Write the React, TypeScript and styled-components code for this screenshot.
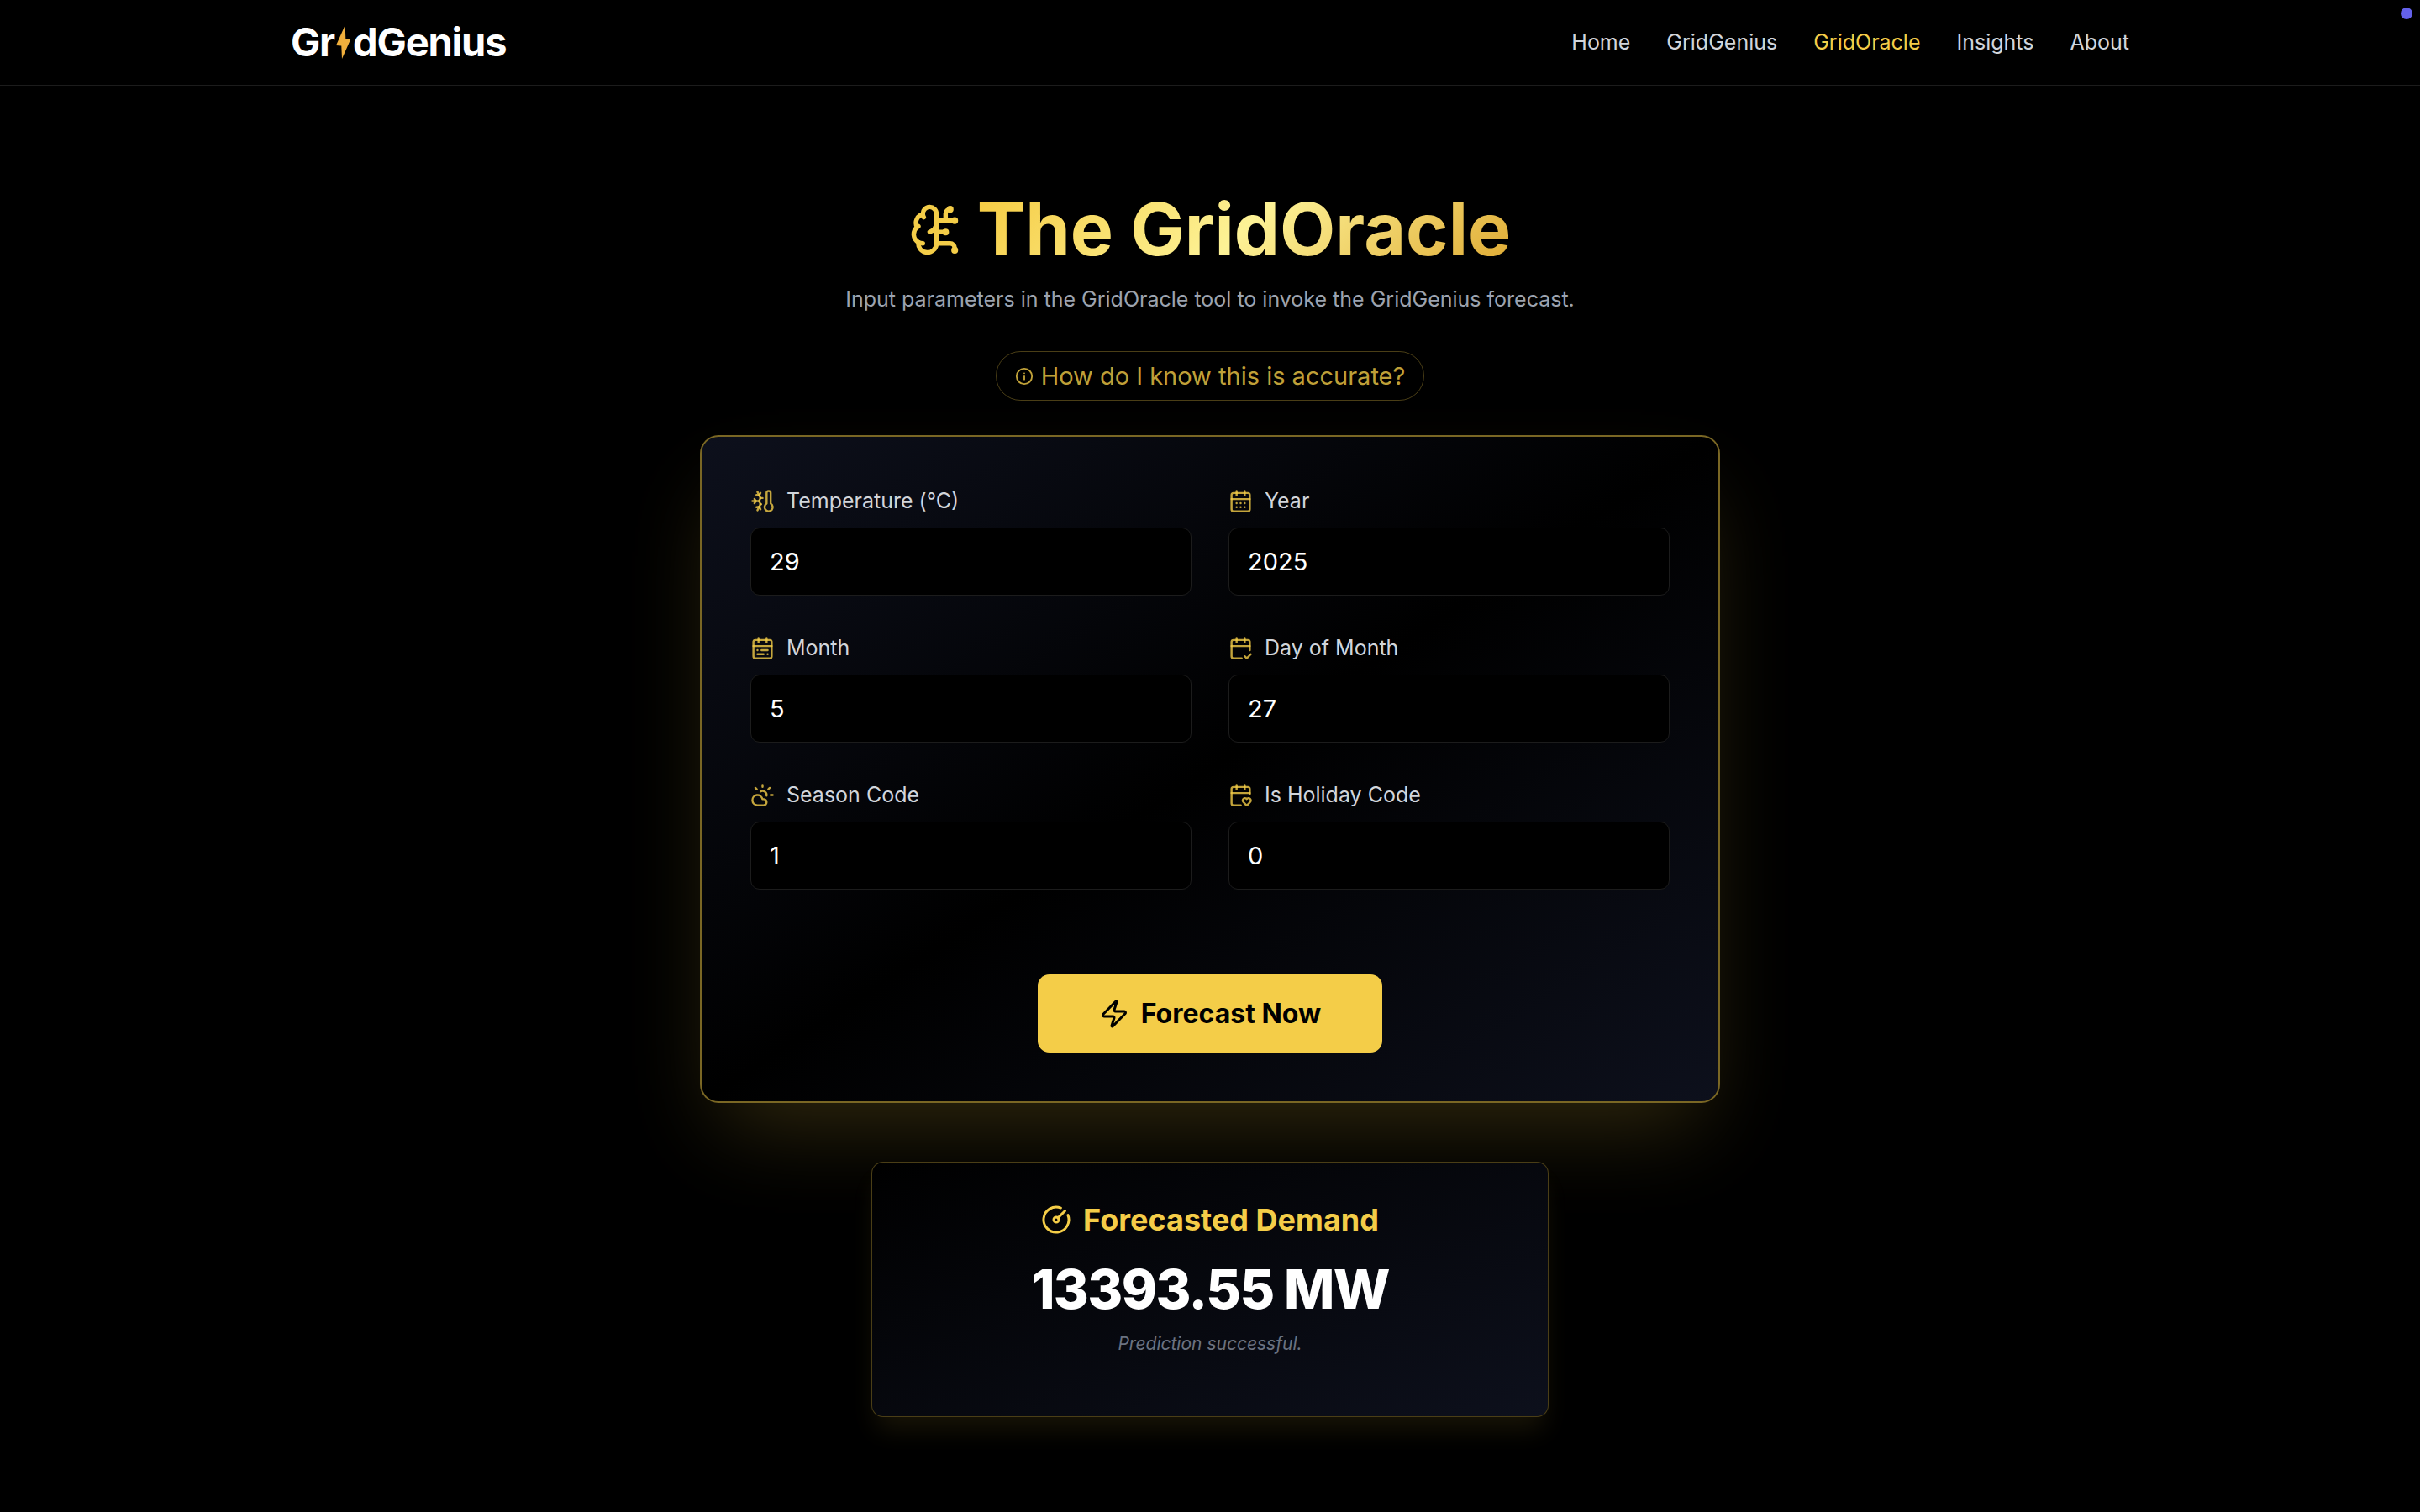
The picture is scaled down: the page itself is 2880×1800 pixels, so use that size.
import React from "react";
import styled, { createGlobalStyle } from "styled-components";
import {
  BrainCircuit,
  CalendarCheck2,
  CalendarDays,
  CalendarHeart,
  CalendarRange,
  CircleGauge,
  CloudSun,
  Info,
  ThermometerSnowflake,
  Zap,
  type LucideIcon,
} from "lucide-react";

const gold = "#f4cd48";
const goldSoft = "rgba(244, 205, 72, 0.8)";

const GlobalStyle = createGlobalStyle`
  *, *::before, *::after { box-sizing: border-box; }
  body {
    margin: 0;
    background: #000;
    color: #fff;
    font-family: Inter, "Liberation Sans", sans-serif;
    font-size: 29px;
    -webkit-font-smoothing: antialiased;
  }
  h1, h2, p { margin: 0; }
`;

const Header = styled.header`
  border-bottom: 1px solid #1c1c1c;
`;

const HeaderInner = styled.div`
  max-width: 2304px;
  margin: 0 auto;
  padding: 21px 58px 23px;
  display: flex;
  align-items: center;
  justify-content: space-between;
`;

const Logo = styled.a`
  display: inline-flex;
  align-items: center;
  color: #fff;
  font-size: 47px;
  line-height: 57px;
  font-weight: 700;
  letter-spacing: -0.025em;
  text-decoration: none;
`;

const LogoBolt = styled.svg`
  width: 22px;
  height: 44px;
`;

const Nav = styled.nav`
  display: flex;
  gap: 43px;
`;

const NavLink = styled.a<{ $active?: boolean }>`
  color: ${(p) => (p.$active ? gold : "#d1d5db")};
  font-size: 25px;
  line-height: 36px;
  text-decoration: none;
`;

const StatusDot = styled.span`
  position: fixed;
  top: 9px;
  right: 9px;
  width: 14px;
  height: 14px;
  border-radius: 50%;
  background: #6461ea;
`;

const Main = styled.main`
  display: flex;
  flex-direction: column;
  align-items: center;
  padding: 128px 58px;
`;

const Title = styled.h1`
  display: flex;
  align-items: center;
  gap: 16px;
  color: ${gold};
  font-size: 86px;
  line-height: 86px;
  font-weight: 700;
`;

const TitleText = styled.span`
  background: linear-gradient(135deg, #f5cb42, #fdf296, #dfab34);
  background-clip: text;
  -webkit-background-clip: text;
  color: transparent;
`;

const Subtitle = styled.p`
  margin-top: 22px;
  color: #9ca3af;
  font-size: 25px;
  line-height: 36px;
`;

const InfoButton = styled.button`
  margin-top: 44px;
  display: inline-flex;
  align-items: center;
  gap: 9px;
  padding: 7px 22px;
  border: 1px solid rgba(244, 205, 72, 0.3);
  border-radius: 30px;
  background: transparent;
  color: ${goldSoft};
  font: inherit;
  line-height: 43px;
`;

const FormCard = styled.form`
  width: 100%;
  max-width: 1214px;
  margin-top: 41px;
  padding: 58px;
  display: flex;
  flex-direction: column;
  align-items: center;
  gap: 101px;
  border: 2px solid rgba(244, 205, 72, 0.5);
  border-radius: 22px;
  background: linear-gradient(to bottom right, #0d101c, #000 50%, #0d101c) padding-box, #000;
  box-shadow: 0 50px 100px -24px rgba(244, 205, 72, 0.2);
`;

const Fields = styled.div`
  width: 100%;
  display: grid;
  grid-template-columns: 1fr 1fr;
  gap: 44px;
`;

const Field = styled.div`
  display: flex;
  flex-direction: column;
  gap: 14px;
`;

const FieldLabel = styled.label`
  display: flex;
  align-items: center;
  gap: 14px;
  color: #d1d5db;
  font-size: 25px;
  line-height: 36px;

  svg { color: ${goldSoft}; }
`;

const FieldInput = styled.input`
  width: 100%;
  padding: 18px 22px;
  border: 1px solid #1c1c1c;
  border-radius: 11px;
  background: #000;
  color: #fff;
  font: inherit;
  line-height: 43px;
  height: 81px;
  outline: none;
`;

const SubmitButton = styled.button`
  display: inline-flex;
  align-items: center;
  gap: 14px;
  padding: 21px 73px;
  border: 0;
  border-radius: 14px;
  background: ${gold};
  color: #000;
  font: inherit;
  font-size: 32px;
  line-height: 51px;
  font-weight: 700;
`;

const ResultCard = styled.section`
  width: 100%;
  max-width: 806px;
  margin-top: 70px;
  padding: 43px 43px 72px;
  display: flex;
  flex-direction: column;
  align-items: center;
  border: 1px solid rgba(244, 205, 72, 0.3);
  border-radius: 14px;
  background: linear-gradient(to bottom right, #000, #0d101c) padding-box, #000;
  box-shadow: 0 20px 30px -6px rgba(244, 205, 72, 0.1);
`;

const ResultTitle = styled.h2`
  display: flex;
  align-items: center;
  gap: 14px;
  color: ${gold};
  font-size: 36px;
  line-height: 50px;
  font-weight: 700;
`;

const ResultValue = styled.p`
  margin-top: 22px;
  font-size: 64px;
  line-height: 72px;
  font-weight: 800;
  letter-spacing: -0.025em;
`;

const ResultNote = styled.p`
  margin-top: 15px;
  color: #6b7280;
  font-size: 21px;
  line-height: 28px;
  font-style: italic;
`;

const links = ["Home", "GridGenius", "GridOracle", "Insights", "About"];

const fields: { id: string; label: string; value: number; icon: LucideIcon }[] = [
  { id: "temperature", label: "Temperature (°C)", value: 29, icon: ThermometerSnowflake },
  { id: "year", label: "Year", value: 2025, icon: CalendarDays },
  { id: "month", label: "Month", value: 5, icon: CalendarRange },
  { id: "day", label: "Day of Month", value: 27, icon: CalendarCheck2 },
  { id: "season", label: "Season Code", value: 1, icon: CloudSun },
  { id: "holiday", label: "Is Holiday Code", value: 0, icon: CalendarHeart },
];

export default function App() {
  return (
    <>
      <GlobalStyle />
      <Header>
        <HeaderInner>
          <Logo href="#home" aria-label="GridGenius">
            <span>Gr</span>
            <LogoBolt viewBox="0 0 22 44" aria-hidden="true">
              <path d="M12.700 2 2 26l6.300.5L9 42l10.500-23.700-6.200-.3z" fill="#f0af3c" />
            </LogoBolt>
            <span>dGenius</span>
          </Logo>
          <Nav>
            {links.map((name) => (
              <NavLink key={name} href={`#${name.toLowerCase()}`} $active={name === "GridOracle"}>
                {name}
              </NavLink>
            ))}
          </Nav>
        </HeaderInner>
      </Header>
      <StatusDot />
      <Main>
        <Title>
          <BrainCircuit size={65} />
          <TitleText>The GridOracle</TitleText>
        </Title>
        <Subtitle>
          Input parameters in the GridOracle tool to invoke the GridGenius forecast.
        </Subtitle>
        <InfoButton type="button">
          <Info size={22} />
          How do I know this is accurate?
        </InfoButton>
        <FormCard onSubmit={(e) => e.preventDefault()}>
          <Fields>
            {fields.map(({ id, label, value, icon: Icon }) => (
              <Field key={id}>
                <FieldLabel htmlFor={id}>
                  <Icon size={29} />
                  {label}
                </FieldLabel>
                <FieldInput id={id} inputMode="numeric" defaultValue={value} />
              </Field>
            ))}
          </Fields>
          <SubmitButton type="submit">
            <Zap size={36} />
            Forecast Now
          </SubmitButton>
        </FormCard>
        <ResultCard>
          <ResultTitle>
            <CircleGauge size={36} />
            Forecasted Demand
          </ResultTitle>
          <ResultValue>13393.55 MW</ResultValue>
          <ResultNote>Prediction successful.</ResultNote>
        </ResultCard>
      </Main>
    </>
  );
}
